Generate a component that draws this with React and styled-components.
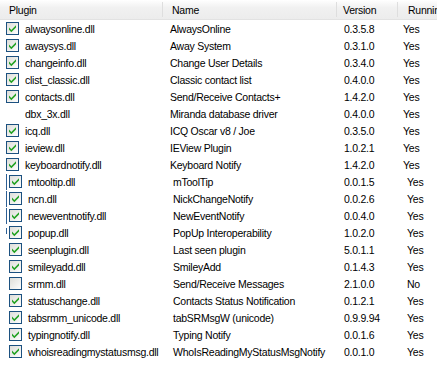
import styled, { createGlobalStyle } from "styled-components";

const plugins = [
  ["alwaysonline.dll", "AlwaysOnline", "0.3.5.8", "Yes", true],
  ["awaysys.dll", "Away System", "0.3.1.0", "Yes", true],
  ["changeinfo.dll", "Change User Details", "0.3.4.0", "Yes", true],
  ["clist_classic.dll", "Classic contact list", "0.4.0.0", "Yes", true],
  ["contacts.dll", "Send/Receive Contacts+", "1.4.2.0", "Yes", true],
  ["dbx_3x.dll", "Miranda database driver", "0.4.0.0", "Yes", null],
  ["icq.dll", "ICQ Oscar v8 / Joe", "0.3.5.0", "Yes", true],
  ["ieview.dll", "IEView Plugin", "1.0.2.1", "Yes", true],
  ["keyboardnotify.dll", "Keyboard Notify", "1.4.2.0", "Yes", true],
  ["mtooltip.dll", "mToolTip", "0.0.1.5", "Yes", true],
  ["ncn.dll", "NickChangeNotify", "0.0.2.6", "Yes", true],
  ["neweventnotify.dll", "NewEventNotify", "0.0.4.0", "Yes", true],
  ["popup.dll", "PopUp Interoperability", "1.0.2.0", "Yes", true],
  ["seenplugin.dll", "Last seen plugin", "5.0.1.1", "Yes", true],
  ["smileyadd.dll", "SmileyAdd", "0.1.4.3", "Yes", true],
  ["srmm.dll", "Send/Receive Messages", "2.1.0.0", "No", false],
  ["statuschange.dll", "Contacts Status Notification", "0.1.2.1", "Yes", true],
  ["tabsrmm_unicode.dll", "tabSRMsgW (unicode)", "0.9.9.94", "Yes", true],
  ["typingnotify.dll", "Typing Notify", "0.0.1.6", "Yes", true],
  ["whoisreadingmystatusmsg.dll", "WhoIsReadingMyStatusMsgNotify", "0.0.1.0", "Yes", true],
];

// rows that were redrawn a few pixels to the right, with a stray focus line
const traces = { 9: "full", 10: "full", 11: "full", 12: "part" };

const Global = createGlobalStyle`
  html, body { margin: 0; padding: 0; background: #fff; }
  body {
    font-family: Tahoma, "Liberation Sans", Arial, sans-serif;
    font-size: 10.5px;
    letter-spacing: -0.25px;
    color: #000;
  }
`;

const List = styled.div`
  width: 437px;
  height: 383px;
  overflow: hidden;
  background: #fff;
`;

const Header = styled.div`
  display: grid;
  grid-template-columns: 163px 174px 61px 1fr;
  height: 19px;
  background: linear-gradient(#ffffff, #f1f1f1 40%, #ececec);
  border-bottom: 1px solid #e2e2e2;
`;

const HeadCell = styled.div`
  display: flex;
  align-items: center;
  padding-left: ${(p) => p.$pad}px;
  border-right: ${(p) => (p.$last ? "none" : "1px solid #dedede")};
  margin: 2px 0;
  white-space: nowrap;
  overflow: hidden;
`;

const Row = styled.div`
  position: relative;
  display: grid;
  grid-template-columns: 163px 174px 60px 1fr;
  height: 17px;
  align-items: center;
  white-space: nowrap;
`;

const Trace = styled.span`
  position: absolute;
  left: 6px;
  top: ${(p) => (p.$kind === "part" ? 4 : 1)}px;
  height: ${(p) => (p.$kind === "part" ? 6 : 16)}px;
  width: 1px;
  background: #2d5f94;
`;

const PluginCell = styled.div`
  display: flex;
  align-items: center;
  gap: 6px;
  padding-left: ${(p) => (p.$shift ? 9 : 6)}px;
  overflow: hidden;
`;

const Cell = styled.div`
  padding-left: ${(p) => p.$pad}px;
  overflow: hidden;
`;

const BoxSlot = styled.span`
  width: 13px;
  height: 13px;
  flex: none;
`;

const CheckBox = ({ checked }) => (
  <svg width="13" height="13" viewBox="0 0 13 13">
    <defs>
      <linearGradient id="cbg" x1="0" y1="0" x2="1" y2="1">
        <stop offset="0" stopColor="#dcdcd7" />
        <stop offset="1" stopColor="#ffffff" />
      </linearGradient>
    </defs>
    <rect x="0.5" y="0.5" width="12" height="12" fill="url(#cbg)" stroke="#1c5180" />
    {checked && (
      <path d="M3 5.5 L5.3 8 L10 3.2 L10 5.4 L5.3 10.2 L3 7.8 Z" fill="#21a121" />
    )}
  </svg>
);

const App = () => (
  <>
    <Global />
    <List>
      <Header>
        <HeadCell $pad={9}>Plugin</HeadCell>
        <HeadCell $pad={9}>Name</HeadCell>
        <HeadCell $pad={6}>Version</HeadCell>
        <HeadCell $pad={10} $last>Running</HeadCell>
      </Header>
      {plugins.map(([file, name, ver, run, checked], i) => {
        const shift = i >= 9;
        return (
          <Row key={file}>
            {traces[i] && <Trace $kind={traces[i]} />}
            <PluginCell $shift={shift}>
              <BoxSlot>{checked !== null && <CheckBox checked={checked} />}</BoxSlot>
              <span>{file}</span>
            </PluginCell>
            <Cell $pad={shift ? 10 : 7}>{name}</Cell>
            <Cell $pad={7}>{ver}</Cell>
            <Cell $pad={shift ? 10 : 6}>{run}</Cell>
          </Row>
        );
      })}
    </List>
  </>
);

export default App;
